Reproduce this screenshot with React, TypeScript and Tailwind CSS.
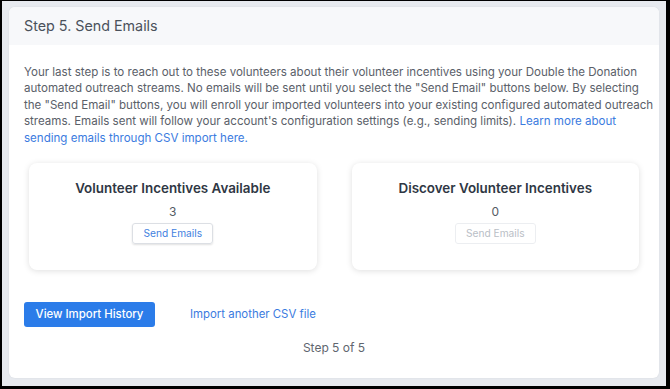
import React from 'react';

interface IncentiveCardProps {
  title: string;
  count: number;
  disabled?: boolean;
}

const IncentiveCard: React.FC<IncentiveCardProps> = ({ title, count, disabled }) => (
  <div className="flex h-[107px] flex-col items-center rounded-lg bg-white pt-[16px] shadow-[0_1px_6px_rgba(0,0,0,0.13)]">
    <h4 className="text-[13.4px] leading-[18px] font-semibold text-[#2f3744]">{title}</h4>
    <div className="mt-[6px] text-[12px] leading-[18px] text-[#555b64]">{count}</div>
    <button
      disabled={disabled}
      className={`mt-[2px] h-[21px] rounded-[3px] border px-[10px] text-[10.2px] leading-[19px] ${
        disabled
          ? 'border-[#eceef1] text-[#b9bec6]'
          : 'border-[#dcdfe4] text-[#3f7fe0] shadow-[0_1px_2px_rgba(0,0,0,0.12)]'
      }`}
    >
      Send Emails
    </button>
  </div>
);

export default function App() {
  return (
    <div
      className="h-[389px] w-[670px] border-t border-l-2 border-r-4 border-b-[3px] border-black bg-[#e7eaef] pt-[6px] pl-[7px] pr-[3px]"
      style={{ fontFamily: 'Inter, "Noto Sans", sans-serif' }}
    >
      <div className="h-[371px] w-[650px] overflow-hidden rounded-md bg-white shadow-[0_0_2px_rgba(0,0,0,0.08)]">
        {/* Header */}
        <div className="flex h-[38px] items-center bg-[#f7f8fa] px-[15px]">
          <h3 className="text-[14.3px] text-[#4a515b]">Step 5. Send Emails</h3>
        </div>

        {/* Body */}
        <div className="px-[15px] pt-[19px]">
          <p className="-mr-[20px] text-[11.55px] leading-[16.4px] text-[#5a6069]">
            Your last step is to reach out to these volunteers about their volunteer incentives using your Double the Donation
            <br />
            automated outreach streams. No emails will be sent until you select the "Send Email" buttons below. By selecting
            <br />
            the "Send Email" buttons, you will enroll your imported volunteers into your existing configured automated outreach
            <br />
            streams. Emails sent will follow your account's configuration settings (e.g., sending limits).{' '}
            <a className="text-[#3b7be0]">
              Learn more about
              <br />
              sending emails through CSV import here.
            </a>
          </p>

          <div className="mt-[17px] grid grid-cols-2 gap-[35px] px-[5px]">
            <IncentiveCard title="Volunteer Incentives Available" count={3} />
            <IncentiveCard title="Discover Volunteer Incentives" count={0} disabled />
          </div>

          <div className="mt-[32px] flex items-center">
            <button className="h-[25px] w-[131px] rounded-[3px] bg-[#2b7ce9] text-[11.4px] font-medium text-white">
              View Import History
            </button>
            <a className="ml-[35px] text-[11.4px] text-[#3b7be0]">Import another CSV file</a>
          </div>

          <div className="mt-[12px] text-center text-[12px] text-[#60666f]">Step 5 of 5</div>
        </div>
      </div>
    </div>
  );
}
